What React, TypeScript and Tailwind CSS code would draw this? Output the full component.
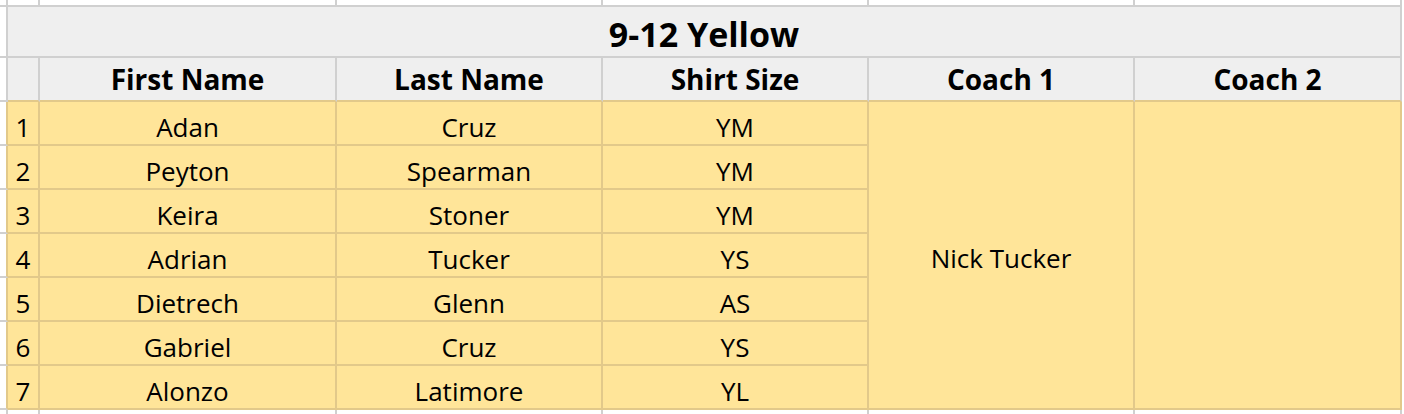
import React from "react";

const rows = [
  ["1", "Adan", "Cruz", "YM"],
  ["2", "Peyton", "Spearman", "YM"],
  ["3", "Keira", "Stoner", "YM"],
  ["4", "Adrian", "Tucker", "YS"],
  ["5", "Dietrech", "Glenn", "AS"],
  ["6", "Gabriel", "Cruz", "YS"],
  ["7", "Alonzo", "Latimore", "YL"],
];

const G = "border-[#d0d0d0]";
const T = "border-[#e2c98a]";

export default function App() {
  return (
    <div
      className="w-[1404px] h-[414px] bg-white overflow-hidden text-black"
      style={{ fontFamily: "'Open Sans', Lato, sans-serif" }}
    >
      <div className="grid grid-cols-[8px_32px_297px_266px_266px_266px_267px] grid-rows-[7px_51px_44px_44px_44px_44px_44px_44px_44px_44px_4px]">
        {/* top blank row */}
        <div className={`border-r-2 border-b-2 ${G}`} />
        <div className={`border-r-2 border-b-2 ${G}`} />
        <div className={`border-r-2 border-b-2 ${G}`} />
        <div className={`border-r-2 border-b-2 ${G}`} />
        <div className={`border-r-2 border-b-2 ${G}`} />
        <div className={`border-r-2 border-b-2 ${G}`} />
        <div className={`border-r-2 border-b-2 ${G}`} />

        {/* title row */}
        <div className={`border-r-2 border-b-2 ${G}`} />
        <div
          className={`col-span-6 bg-[#efefef] border-r-2 border-b-2 ${G} flex items-end justify-center pb-[5px] text-[34px] font-bold leading-none`}
        >
          9-12 Yellow
        </div>

        {/* header row */}
        <div className={`border-r-2 border-b-2 ${G}`} />
        <div className={`bg-[#efefef] border-r-2 ${G} border-b-2 border-b-[#e2c98a]`} />
        {["First Name", "Last Name", "Shirt Size", "Coach 1", "Coach 2"].map((h) => (
          <div
            key={h}
            className={`bg-[#efefef] border-r-2 ${G} border-b-2 border-b-[#e2c98a] flex items-end justify-center pb-[7px] text-[28px] font-bold leading-none`}
          >
            {h}
          </div>
        ))}

        {/* data rows */}
        {rows.map((r, i) => (
          <React.Fragment key={r[0]}>
            <div className={`border-r-2 border-r-[#e2c98a] border-b-2 ${G}`} />
            <div
              className={`bg-[#ffe599] border-r-2 border-b-2 ${T} flex items-end justify-center pb-[4px] text-[26px] leading-none`}
            >
              {r[0]}
            </div>
            {r.slice(1).map((c, j) => (
              <div
                key={j}
                className={`bg-[#ffe599] border-r-2 border-b-2 ${T} flex items-end justify-center pb-[4px] text-[26px] leading-none`}
              >
                {c}
              </div>
            ))}
            {i === 0 && (
              <>
                <div
                  className={`row-span-7 bg-[#ffe599] border-r-2 border-b-2 ${T} flex items-center justify-center pt-[6px] text-[26px] leading-none`}
                >
                  Nick Tucker
                </div>
                <div className={`row-span-7 bg-[#ffe599] border-r-2 border-b-2 ${T}`} />
              </>
            )}
          </React.Fragment>
        ))}

        {/* bottom blank row */}
        <div className={`border-r-2 ${G}`} />
        <div className={`border-r-2 ${G}`} />
        <div className={`border-r-2 ${G}`} />
        <div className={`border-r-2 ${G}`} />
        <div className={`border-r-2 ${G}`} />
        <div className={`border-r-2 ${G}`} />
        <div className={`border-r-2 ${G}`} />
      </div>
    </div>
  );
}
